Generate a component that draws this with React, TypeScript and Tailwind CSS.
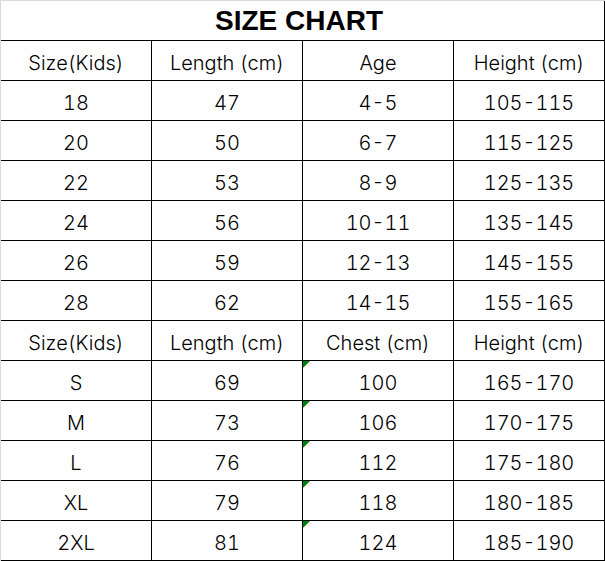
const top = [
  ["Size(Kids)", "Length (cm)", "Age", "Height (cm)"],
  ["18", "47", "4-5", "105-115"],
  ["20", "50", "6-7", "115-125"],
  ["22", "53", "8-9", "125-135"],
  ["24", "56", "10-11", "135-145"],
  ["26", "59", "12-13", "145-155"],
  ["28", "62", "14-15", "155-165"],
];

const bottom = [
  ["Size(Kids)", "Length (cm)", "Chest (cm)", "Height (cm)"],
  ["S", "69", "100", "165-170"],
  ["M", "73", "106", "170-175"],
  ["L", "76", "112", "175-180"],
  ["XL", "79", "118", "180-185"],
  ["2XL", "81", "124", "185-190"],
];

const Cell = ({ text, flag }: { text: string; flag?: boolean }) => (
  <div className="relative h-10 flex items-center justify-center border-r border-b border-black text-[20px] font-light text-black tabular-nums">
    {flag && (
      <span className="absolute left-0 top-0 w-0 h-0 border-t-[7px] border-t-[#008000] border-r-[7px] border-r-transparent" />
    )}
    <span className="pt-[4px]">{text}</span>
  </div>
);

export default function App() {
  return (
    <div
      className="w-[605px] h-[561px] bg-white border-l border-t border-[#d9d9d9]"
      style={{ fontFamily: 'Inter, "Noto Sans", sans-serif' }}
    >
      <div className="h-10 flex items-center justify-center border-r border-b border-black pr-[7px]">
        <h1
          className="text-[28px] font-bold text-black leading-none"
          style={{ fontFamily: '"Liberation Sans", Arial, sans-serif' }}
        >
          SIZE CHART
        </h1>
      </div>
      <div className="grid grid-cols-[151px_151px_151px_151px]">
        {top.map((row, i) =>
          row.map((c, j) => <Cell key={`t${i}-${j}`} text={c} />),
        )}
        {bottom.map((row, i) =>
          row.map((c, j) => (
            <Cell key={`b${i}-${j}`} text={c} flag={i > 0 && j === 2} />
          )),
        )}
      </div>
    </div>
  );
}
